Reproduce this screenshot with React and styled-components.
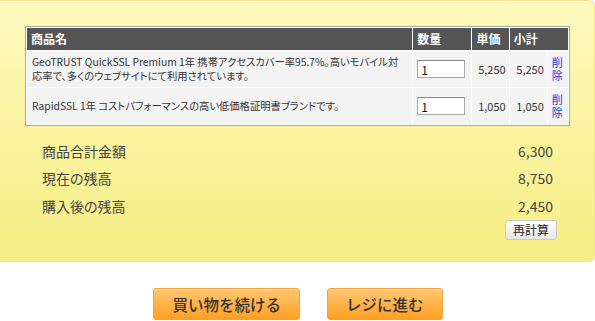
import React from "react";
import styled, { createGlobalStyle } from "styled-components";

const GlobalStyle = createGlobalStyle`
	html, body {
		margin: 0;
		padding: 0;
		background: #fff;
	}
	body {
		font-family: "Noto Sans CJK JP", "Noto Sans", sans-serif;
		color: #333;
		font-feature-settings: "palt";
	}
`;

const items = [
	{
		id: 1,
		name: ["GeoTRUST QuickSSL Premium 1年 携帯アクセスカバー率95.7%。高いモバイル対", "応率で、多くのウェブサイトにて利用されています。"],
		qty: 1,
		price: "5,250",
		subtotal: "5,250",
	},
	{
		id: 2,
		name: ["RapidSSL 1年 コストパフォーマンスの高い低価格証明書ブランドです。"],
		qty: 1,
		price: "1,050",
		subtotal: "1,050",
	},
];

const totals = [
	{ label: "商品合計金額", value: "6,300" },
	{ label: "現在の残高", value: "8,750" },
	{ label: "購入後の残高", value: "2,450" },
];

const App = () => {
	return (
		<>
			<GlobalStyle />
			<Panel>
				<CartTable>
					<colgroup>
						<col style={{ width: "383px" }} />
						<col style={{ width: "58px" }} />
						<col style={{ width: "36px" }} />
						<col style={{ width: "37px" }} />
						<col style={{ width: "20px" }} />
					</colgroup>
					<thead>
						<tr>
							<Th>商品名</Th>
							<Th>数量</Th>
							<Th>単価</Th>
							<Th colSpan={2}>小計</Th>
						</tr>
					</thead>
					<tbody>
						{items.map((item) => (
							<tr key={item.id}>
								<NameCell>
									{item.name.map((line, i) => (
										<React.Fragment key={i}>
											{i > 0 && <br />}
											{line}
										</React.Fragment>
									))}
								</NameCell>
								<QtyCell>
									<QtyInput type="text" defaultValue={item.qty} />
								</QtyCell>
								<NumCell>{item.price}</NumCell>
								<NumCell>{item.subtotal}</NumCell>
								<DeleteCell>
									<DeleteLink href="#">削除</DeleteLink>
								</DeleteCell>
							</tr>
						))}
					</tbody>
				</CartTable>

				<Summary>
					{totals.map((t) => (
						<SummaryRow key={t.label}>
							<span>{t.label}</span>
							<span>{t.value}</span>
						</SummaryRow>
					))}
					<RecalcRow>
						<RecalcBtn>再計算</RecalcBtn>
					</RecalcRow>
				</Summary>
			</Panel>

			<Actions>
				<OrangeBtn>買い物を続ける</OrangeBtn>
				<OrangeBtn>レジに進む</OrangeBtn>
			</Actions>
		</>
	);
};

const Panel = styled.div`
	box-sizing: border-box;
	width: 595px;
	padding: 25px 24px 21px 25px;
	background: linear-gradient(to bottom, #fdf9bf 0%, #f6ee83 100%);
	border: 1px solid #efe58a;
	border-left: none;
	border-radius: 0 6px 6px 0;
`;

const CartTable = styled.table`
	width: 545px;
	table-layout: fixed;
	border: 1px solid #a8a8a8;
	border-spacing: 1px;
	background: #fff;
	font-size: 11px;
	line-height: 14px;
`;

const Th = styled.th`
	background: #555;
	color: #fff;
	font-size: 12px;
	font-weight: bold;
	text-align: left;
	height: 22px;
	padding: 0 4px;
	box-sizing: border-box;
`;

const Td = styled.td`
	background: #f3f3f3;
	padding: 4px;
	vertical-align: middle;
	color: #333;
`;

const NameCell = styled(Td)`
	padding-left: 5px;
	height: 36px;
	box-sizing: border-box;
	font-size: 10.3px;
	line-height: 14px;
`;

const QtyCell = styled(Td)`
	padding: 0 4px;
`;

const QtyInput = styled.input`
	box-sizing: border-box;
	width: 48px;
	height: 18px;
	border: 1px solid #a9a9a9;
	border-top-color: #888;
	padding: 0 3px;
	font-family: "Noto Sans CJK JP", sans-serif;
	font-size: 12px;
	color: #111;
	background: #fff;
`;

const NumCell = styled(Td)`
	text-align: right;
	padding: 0 3px 0 0;
`;

const DeleteCell = styled(Td)`
	padding: 0 0 0 4px;
	text-align: left;
`;

const DeleteLink = styled.a`
	color: #0b3bd6;
	text-decoration: none;
	font-size: 11px;
	line-height: 13px;
	display: block;
	width: 12px;
	word-break: break-all;
`;

const Summary = styled.div`
	margin: 11px 17px 0 17px;
	font-size: 14px;
	color: #444;
`;

const SummaryRow = styled.div`
	display: flex;
	justify-content: space-between;
	align-items: center;
	height: 27.5px;
`;

const RecalcRow = styled.div`
	display: flex;
	justify-content: flex-end;
	margin: 0 -4px 0 0;
`;

const RecalcBtn = styled.button`
	box-sizing: border-box;
	width: 52px;
	height: 20px;
	padding: 0;
	border: 1px solid #c8c8c8;
	border-radius: 3px;
	background: linear-gradient(to bottom, #ffffff 0%, #e6e6e6 100%);
	font-family: "Noto Sans CJK JP", sans-serif;
	font-size: 12px;
	color: #222;
`;

const Actions = styled.div`
	display: flex;
	justify-content: center;
	gap: 27px;
	margin-top: 26px;
	padding-left: 1px;
`;

const OrangeBtn = styled.button`
	box-sizing: border-box;
	height: 32px;
	padding: 0 18px;
	border: 1px solid #f2a340;
	border-radius: 3px;
	background: linear-gradient(to bottom, #ffc772 0%, #ff9f22 100%);
	font-family: "Noto Sans CJK JP", sans-serif;
	font-size: 15.5px;
	font-weight: 500;
	color: #333;
	box-shadow: inset 0 1px 0 rgba(255, 255, 255, 0.4);
`;

export default App;
